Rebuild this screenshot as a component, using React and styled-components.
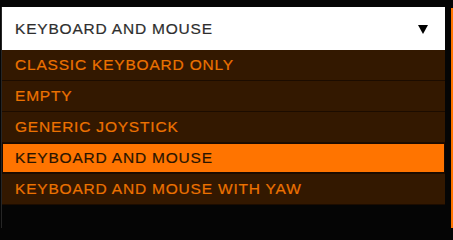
import React from 'react'
import styled, { createGlobalStyle } from 'styled-components';

const GlobalStyle = createGlobalStyle`
html, body {
  margin: 0;
  padding: 0;
  background: #050505;
}
`;

export const Page = styled.div`
display: flex;
width: 453px;
height: 228px;
padding: 7px 0 0 1px;
box-sizing: border-box;
background: #050505;
font-family: "Liberation Sans", Arial, sans-serif;
overflow: hidden;
`;

export const Dropdown = styled.div`
width: 444px;
display: flex;
flex-direction: column;
border-left: 1px solid #262626;
box-sizing: border-box;
`;

export const Header = styled.div`
height: 43px;
display: flex;
align-items: center;
justify-content: space-between;
padding: 0 17px 0 13px;
background: #ffffff;
color: #2e2e2e;
font-size: 15.5px;
letter-spacing: 0.8px;
-webkit-text-stroke: 0.2px #2e2e2e;
`;

export const Arrow = styled.span`
width: 0;
height: 0;
border-left: 5.5px solid transparent;
border-right: 5.5px solid transparent;
border-top: 9px solid #000;
margin-top: 1px;
`;

export const List = styled.div`
display: flex;
flex-direction: column;
background: #331800;
`;

export const Item = styled.div`
height: 31px;
display: flex;
align-items: center;
padding-left: 13px;
box-sizing: border-box;
border-bottom: 1px solid #1c0c00;
font-size: 15.5px;
letter-spacing: 0.8px;
color: ${p => p.$active ? '#2a1400' : '#ec7200'};
-webkit-text-stroke: 0.2px ${p => p.$active ? '#2a1400' : '#ec7200'};
background: ${p => p.$active ? '#ff7400' : 'transparent'};
box-shadow: ${p => p.$active ? 'inset 0 0 0 1px #1a0a00' : 'none'};
`;

export const Edge = styled.div`
width: 2px;
margin-left: auto;
margin-top: 1px;
background: #ff7400;
`;

const options = [
    'CLASSIC KEYBOARD ONLY',
    'EMPTY',
    'GENERIC JOYSTICK',
    'KEYBOARD AND MOUSE',
    'KEYBOARD AND MOUSE WITH YAW',
];

const App = () => {
    const selected = 'KEYBOARD AND MOUSE';
    return (
        <>
        <GlobalStyle />
        <Page>
            <Dropdown>
                <Header>
                    <span>{selected}</span>
                    <Arrow />
                </Header>
                <List>
                    {options.map(o => (
                        <Item key={o} $active={o === selected}>{o}</Item>
                    ))}
                </List>
            </Dropdown>
            <Edge />
        </Page>
        </>
    )
}

export default App
